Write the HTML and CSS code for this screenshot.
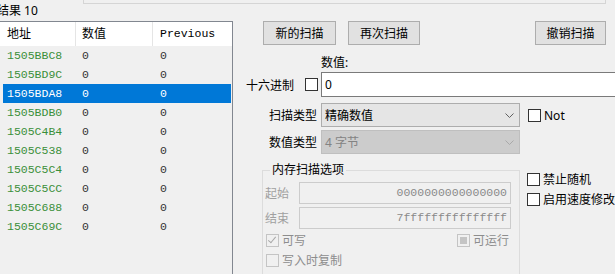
FILE: index.html
```html
<!DOCTYPE html>
<html>
<head>
<meta charset="utf-8">
<title>Cheat Engine</title>
<link rel="stylesheet" href="styles.css">
</head>
<body>
<div class="topbar"></div>
<div class="main">
  <div class="results">
    <div class="found">结果 10</div>
    <div class="list">
      <div class="list-head">
        <span class="col col-addr">地址</span>
        <span class="col col-val">数值</span>
        <span class="col col-prev mono">Previous</span>
      </div>
      <div class="row"><span class="col col-addr mono addr">1505BBC8</span><span class="col col-val mono">0</span><span class="col col-prev mono">0</span></div>
      <div class="row"><span class="col col-addr mono addr">1505BD9C</span><span class="col col-val mono">0</span><span class="col col-prev mono">0</span></div>
      <div class="row selected"><span class="col col-addr mono addr">1505BDA8</span><span class="col col-val mono">0</span><span class="col col-prev mono">0</span></div>
      <div class="row"><span class="col col-addr mono addr">1505BDB0</span><span class="col col-val mono">0</span><span class="col col-prev mono">0</span></div>
      <div class="row"><span class="col col-addr mono addr">1505C4B4</span><span class="col col-val mono">0</span><span class="col col-prev mono">0</span></div>
      <div class="row"><span class="col col-addr mono addr">1505C538</span><span class="col col-val mono">0</span><span class="col col-prev mono">0</span></div>
      <div class="row"><span class="col col-addr mono addr">1505C5C4</span><span class="col col-val mono">0</span><span class="col col-prev mono">0</span></div>
      <div class="row"><span class="col col-addr mono addr">1505C5CC</span><span class="col col-val mono">0</span><span class="col col-prev mono">0</span></div>
      <div class="row"><span class="col col-addr mono addr">1505C688</span><span class="col col-val mono">0</span><span class="col col-prev mono">0</span></div>
      <div class="row"><span class="col col-addr mono addr">1505C69C</span><span class="col col-val mono">0</span><span class="col col-prev mono">0</span></div>
    </div>
  </div>

  <div class="scan">
    <div class="buttons">
      <button class="btn btn-new">新的扫描</button>
      <button class="btn btn-next">再次扫描</button>
      <button class="btn btn-undo">撤销扫描</button>
    </div>

    <div class="form">
      <div class="value-caption">数值:</div>
      <div class="label hex"><span>十六进制</span><span class="check"></span></div>
      <div class="value-input">0</div>

      <div class="label row-type">扫描类型</div>
      <div class="select row-type"><span>精确数值</span><svg class="chev" width="9" height="5" viewBox="0 0 9 5"><polyline points="0.5,0.5 4.5,4.5 8.5,0.5"/></svg></div>
      <div class="side-check row-type"><span class="check"></span>Not</div>

      <div class="label row-vtype">数值类型</div>
      <div class="select disabled row-vtype"><span>4 字节</span><svg class="chev" width="9" height="5" viewBox="0 0 9 5"><polyline points="0.5,0.5 4.5,4.5 8.5,0.5"/></svg></div>
    </div>

    <div class="lower">
      <fieldset class="memopts">
        <legend>内存扫描选项</legend>
        <div class="range"><span class="range-label">起始</span><div class="range-field mono">0000000000000000</div></div>
        <div class="range"><span class="range-label">结束</span><div class="range-field mono">7fffffffffffffff</div></div>
        <div class="opt-row first">
          <span class="opt"><span class="check off checked"></span>可写</span>
          <span class="opt"><span class="check off mixed"></span>可运行</span>
        </div>
        <div class="opt-row">
          <span class="opt"><span class="check off"></span>写入时复制</span>
        </div>
      </fieldset>
      <div class="extras">
        <div class="side-check"><span class="check"></span>禁止随机</div>
        <div class="side-check"><span class="check"></span>启用速度修改</div>
      </div>
    </div>
  </div>
</div>
</body>
</html>
```

FILE: styles.css
```css
body {
    margin: 0;
    width: 615px;
    height: 274px;
    overflow: hidden;
    background-color: #f0f0f0;
    font-family: "Noto Sans", "Noto Sans CJK SC", sans-serif;
    font-size: 12px;
    color: #000;
}

.mono {
    font-family: "Liberation Mono", monospace;
    font-size: 11.5px;
}

.topbar {
    margin-left: 83px;
    width: 521px;
    height: 3px;
    border: 1px solid #d5d5d5;
    border-top: none;
}

.main {
    display: flex;
}

/* found list */
.results {
    width: 233px;
    flex: none;
}

.found {
    height: 17px;
    line-height: 14px;
    margin-left: -3px;
    white-space: nowrap;
}

.list {
    height: 260px;
    box-sizing: border-box;
    border-top: 1px solid #828790;
    border-right: 1px solid #828790;
}

.col {
    box-sizing: border-box;
    white-space: nowrap;
    overflow: hidden;
}

.list-head {
    display: flex;
    height: 24px;
    line-height: 24px;
    background-color: #fff;
}

.list-head .col-addr {
    width: 76px;
    padding-left: 7px;
    border-right: 1px solid #e5e5e5;
}

.list-head .col-val {
    width: 77px;
    padding-left: 6px;
    border-right: 1px solid #e5e5e5;
}

.list-head .col-prev {
    flex: 1;
    padding-left: 7px;
}

.row {
    display: flex;
    height: 19px;
    line-height: 19px;
    margin: 0 1px 0 3px;
    color: #333;
}

.row .col-addr {
    width: 73px;
    padding-left: 4px;
}

.row .col-val {
    width: 77px;
    padding-left: 6px;
}

.row .col-prev {
    flex: 1;
    padding-left: 7px;
}

.addr {
    color: #3a8f3a;
}

.row.selected {
    background-color: #0078d7;
    color: #fff;
}

.row.selected .addr {
    color: #fff;
}

/* scan panel */
.scan {
    flex: 1;
    min-width: 0;
}

.buttons {
    display: flex;
    margin: 17px 9px 0 30px;
}

.btn {
    height: 24px;
    padding: 0;
    border: 1px solid #adadad;
    background-color: #e1e1e1;
    font: inherit;
    color: #000;
}

.btn-new {
    width: 73px;
}

.btn-next {
    width: 72px;
    margin-left: 12px;
}

.btn-undo {
    width: 71px;
    margin-left: auto;
}

.form {
    display: grid;
    grid-template-columns: 88px 199px 1fr;
    margin-top: 11px;
}

.value-caption {
    grid-column: 2;
    height: 14px;
    line-height: 14px;
    margin-bottom: 2px;
}

.label {
    grid-column: 1;
    display: flex;
    align-items: center;
    justify-content: flex-end;
    padding-right: 4px;
    white-space: nowrap;
}

.label.hex {
    gap: 11px;
    padding-right: 3px;
    height: 25px;
}

.value-input {
    grid-column: 2 / 4;
    height: 25px;
    box-sizing: border-box;
    margin-right: -10px;
    padding-left: 3px;
    line-height: 23px;
    border: 1px solid #7a7a7a;
    background-color: #fff;
}

.row-type {
    margin-top: 6px;
}

.row-vtype {
    margin-top: 3px;
}

.select {
    grid-column: 2;
    height: 24px;
    box-sizing: border-box;
    display: flex;
    align-items: center;
    justify-content: space-between;
    padding: 0 5px 0 3px;
    border: 1px solid #adadad;
    background-color: #e5e5e5;
}

.select.disabled {
    border-color: #bfbfbf;
    background-color: #cccccc;
    color: #838383;
}

.chev polyline {
    fill: none;
    stroke: #606060;
    stroke-width: 1;
}

.select.disabled .chev polyline {
    stroke: #a9a9a9;
}

.side-check {
    display: flex;
    align-items: center;
    gap: 3px;
    margin-left: 8px;
    white-space: nowrap;
}

.check {
    position: relative;
    flex: none;
    width: 13px;
    height: 13px;
    box-sizing: border-box;
    border: 1px solid #333;
    background-color: #fff;
}

.check.off {
    border-color: #c4c4c4;
    background-color: #f0f0f0;
}

.check.checked::after {
    content: "";
    position: absolute;
    left: 3px;
    top: 0;
    width: 3px;
    height: 7px;
    border-right: 1.5px solid #a8a8a8;
    border-bottom: 1.5px solid #a8a8a8;
    transform: rotate(40deg);
}

.check.mixed::after {
    content: "";
    position: absolute;
    left: 2px;
    top: 2px;
    width: 7px;
    height: 7px;
    background-color: #c4c4c4;
}

/* memory scan options */
.lower {
    display: flex;
    align-items: flex-start;
    margin-top: 8px;
}

.memopts {
    margin: 0 0 0 29px;
    width: 259px;
    height: 120px;
    box-sizing: border-box;
    padding: 4px 8px 0 2px;
    border: 1px solid #dcdcdc;
}

.memopts legend {
    margin-left: 5px;
    padding: 0 2px;
    line-height: 16px;
}

.range {
    display: flex;
    align-items: center;
    height: 22px;
}

.range + .range {
    margin-top: 3px;
}

.range-label {
    width: 34px;
    flex: none;
    color: #a0a0a0;
}

.range-field {
    flex: 1;
    height: 22px;
    box-sizing: border-box;
    padding-right: 3px;
    line-height: 20px;
    text-align: right;
    border: 1px solid #cccccc;
    background-color: #f0f0f0;
    color: #8a8a8a;
}

.opt-row {
    display: flex;
    align-items: center;
    justify-content: space-between;
    height: 20px;
    padding: 0 2px 0 1px;
}

.opt-row.first {
    margin-top: 1px;
}

.opt {
    display: flex;
    align-items: center;
    gap: 3px;
    color: #8d8d8d;
}

.extras {
    margin: 7px 0 0 7px;
}

.extras .side-check {
    height: 20px;
    margin-left: 0;
}
```
